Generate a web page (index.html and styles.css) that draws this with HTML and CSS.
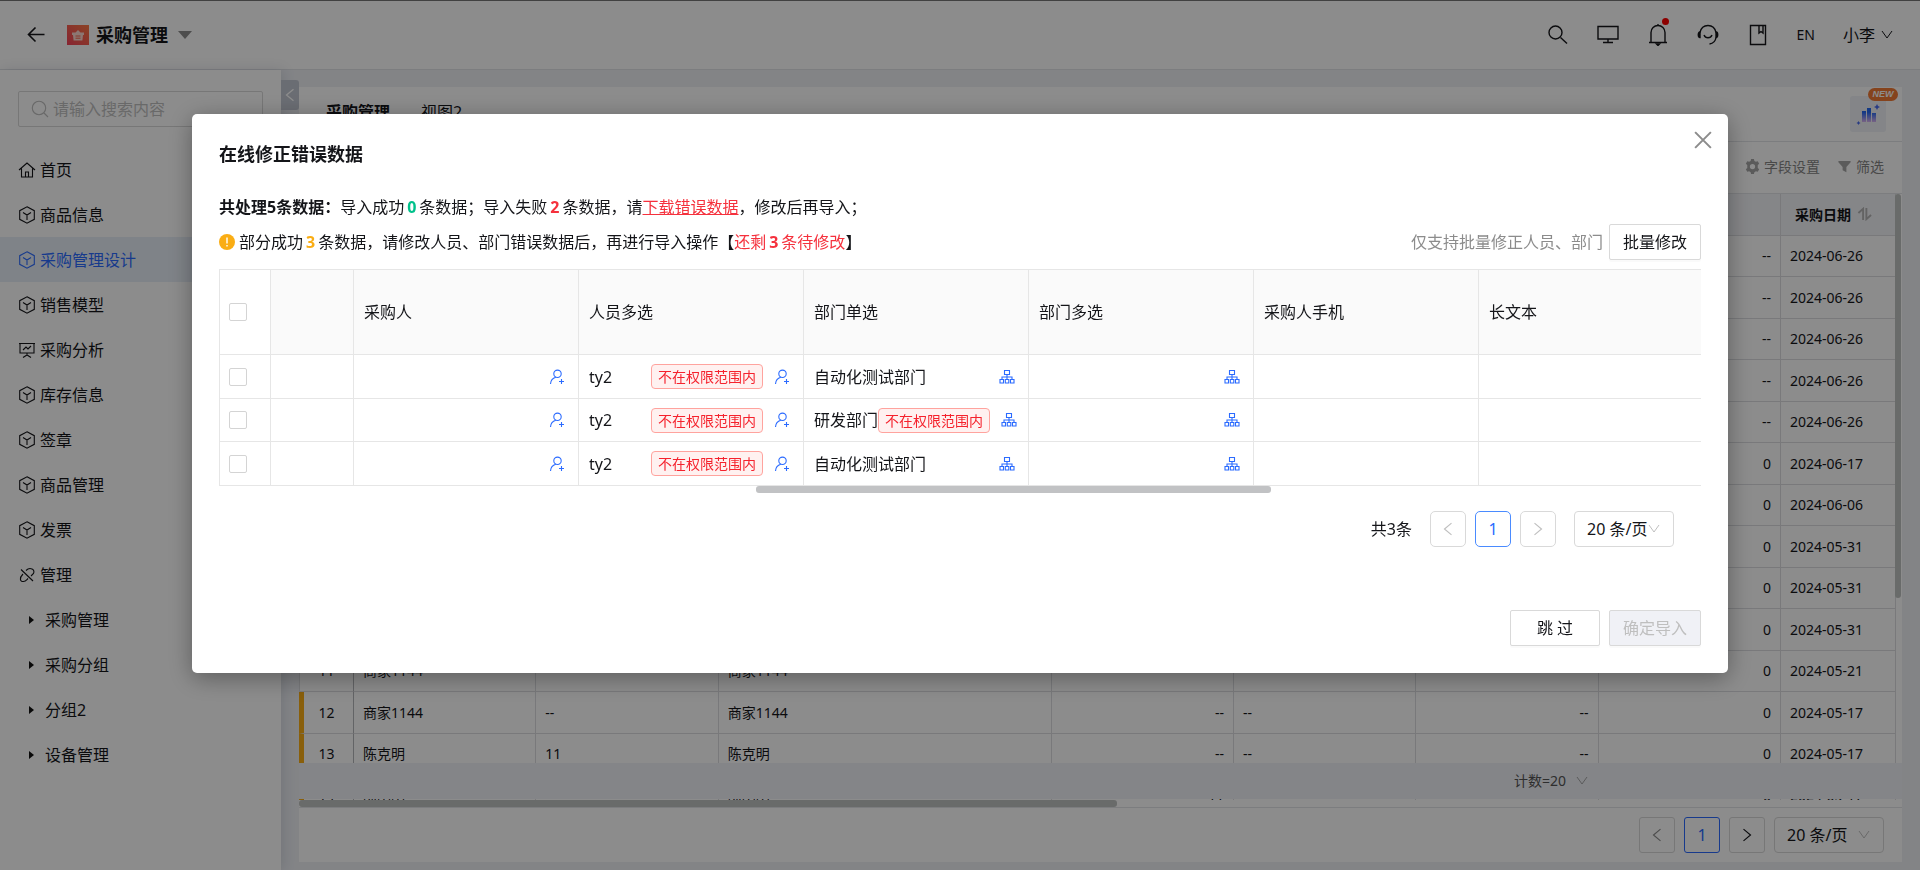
FILE: index.html
```html
<!DOCTYPE html>
<html lang="zh-CN">
<head>
<meta charset="utf-8">
<title>采购管理</title>
<link rel="stylesheet" href="styles.css">
</head>
<body>
<svg class="defs" width="0" height="0" aria-hidden="true">
  <symbol id="cube" viewBox="0 0 18 18"><path d="M9 .8 16.300 4.700V13.300L9 17.200 1.700 13.300V4.700ZM5 6.500 9 9l4-2.500M9 9v5"/></symbol>
  <symbol id="user" viewBox="0 0 16 16"><circle cx="8.500" cy="4.800" r="3.700"/><path d="M1.500 15c.2-3.600 2.200-5.800 5.300-6.700M12.500 10v5M10 12.500h5"/></symbol>
  <symbol id="org" viewBox="0 0 16 16"><path d="M5.500 1.500h5v4h-5ZM8 5.500v5M3 10.500V8h10v2.500M1 10.500h3.500V14H1ZM6.300 10.500h3.500V14H6.300ZM11.500 10.500H15V14h-3.500Z"/></symbol>
  <symbol id="down" viewBox="0 0 12 12"><path d="m1 2 5 7 5-7"/></symbol>
  <symbol id="left" viewBox="0 0 12 12"><path d="M9 1 3 6l6 5"/></symbol>
  <symbol id="right" viewBox="0 0 12 12"><path d="m3 1 6 5-6 5"/></symbol>
</svg>
<div class="app">
  <header class="top">
    <button class="plain" aria-label="返回"><svg class="ic back" viewBox="0 0 18 18"><path d="M17.500 8.500H1.500M8.500 1.500l-7 7 7 7"/></svg></button>
    <svg class="logo" viewBox="0 0 22 20"><defs><linearGradient id="lg" x1="1" y1="0" x2="0" y2="1"><stop offset="0" stop-color="#ff7a45"/><stop offset="1" stop-color="#f5435c"/></linearGradient></defs><path fill="url(#lg)" d="M0 0h22v20H0z"/><path fill="#ffd9cf" d="M5 7.500h3.500L11 5l2.500 2.500H17v2.500h-1l-.6 5.500H6.600L6 10H5z"/><path stroke="#f5654c" d="M8.500 11h5M8.500 13.200h5"/></svg>
    <h1>采购管理</h1><span class="caret"></span>
    <nav class="tools">
      <button class="plain" aria-label="搜索"><svg class="ic t22" viewBox="0 0 22 22"><circle cx="8.500" cy="8.500" r="6.500"/><path d="m13.500 13.500 6.500 6"/></svg></button>
      <button class="plain" aria-label="桌面"><svg class="ic t22" viewBox="0 0 22 22"><path d="M1 2.500h20v12.500H1ZM11 15v3.500M6 18.500h10"/></svg></button>
      <button class="plain bell" aria-label="通知"><svg class="ic t22" viewBox="0 0 22 22"><path d="M4 18.500V8.500a7 7 0 0 1 14 0V18.500M2 18.500h18M11 0v2"/><path class="fill" d="M9.500 20h3l-1.500 1.500Z"/></svg><i class="dot"></i></button>
      <button class="plain" aria-label="客服"><svg class="ic t22" viewBox="0 0 22 22"><path d="M3 8.500C4 3.800 7 1.500 11 1.500s7 2.300 8 7M7 11c1.500 3.700 6.500 3.700 8 0M19 13.500c-.5 3.500-2.500 6-6.500 6.500"/><path class="fill" d="M3 8C.7 8 .7 13.500 3 13.500ZM19 8c2.300 0 2.300 5.500 0 5.500Z"/></svg></button>
      <button class="plain" aria-label="手册"><svg class="ic t22" viewBox="0 0 22 22"><path d="M3.500 1.500h15v19h-15ZM12 1.500V9l2-1.500L16 9V1.500"/></svg></button>
      <button class="plain en">EN</button>
      <button class="plain me">小李 <svg class="ic s12"><use href="#down"/></svg></button>
    </nav>
  </header>
  <div class="body">
    <aside class="side">
      <label class="search"><svg class="ic" viewBox="0 0 18 18"><circle cx="8" cy="8" r="6.700"/><path d="m13 13 4 4"/></svg><input type="text" placeholder="请输入搜索内容" aria-label="搜索"></label>
      <nav class="menu">
        <a href="#"><svg class="ic" viewBox="0 0 18 18"><path d="M1 9 9 2l8 7M3.500 7.500V16h11V7.500M7.500 16v-5h3v5"/></svg>首页</a>
        <a href="#"><svg class="ic"><use href="#cube"/></svg>商品信息</a>
        <a href="#" class="on"><svg class="ic"><use href="#cube"/></svg>采购管理设计</a>
        <a href="#"><svg class="ic"><use href="#cube"/></svg>销售模型</a>
        <a href="#"><svg class="ic" viewBox="0 0 18 18"><path d="M1 2.500h16M2 2.500v9.500h14V2.500M5 9l3-3 2 2 3-3M9 12v2M5 16.500l4-2.500 4 2.500"/></svg>采购分析</a>
        <a href="#"><svg class="ic"><use href="#cube"/></svg>库存信息</a>
        <a href="#"><svg class="ic"><use href="#cube"/></svg>签章</a>
        <a href="#"><svg class="ic"><use href="#cube"/></svg>商品管理</a>
        <a href="#"><svg class="ic"><use href="#cube"/></svg>发票</a>
        <a href="#"><svg class="ic" viewBox="0 0 18 18"><path d="M3 3.500 15 15M8 4.500c4-4 9.500-1 7.500 3L13 10M5 8c-4 4-3 8 .5 7.500 2 0 3-1.500 4.500-3"/></svg>管理</a>
        <a href="#" class="sub">采购管理</a>
        <a href="#" class="sub">采购分组</a>
        <a href="#" class="sub">分组2</a>
        <a href="#" class="sub">设备管理</a>
      </nav>
    </aside>
    <main class="main">
      <button class="fold" aria-label="收起"><svg class="ic s14"><use href="#left"/></svg></button>
      <section class="card">
        <div class="tabs"><a href="#" class="cur">采购管理</a><a href="#">视图2</a>
          <button class="ai" aria-label="智能分析"><svg viewBox="0 0 24 24"><defs><linearGradient id="bg" x1="0" y1="0" x2="0" y2="1"><stop offset=".3" stop-color="#2468f2"/><stop offset="1" stop-color="#d9b3f0"/></linearGradient></defs><path fill="url(#bg)" d="M6 8h4v11H6zM11 5h4v14h-4zM16 10h4v9h-4z"/><path fill="#4a6cf0" d="m21 1 1 2 2 1-2 1-1 2-1-2-2-1 2-1zM2.500 18l.7 1.300 1.300.7-1.300.7-.7 1.300-.7-1.300L.5 20l1.300-.7z"/></svg><span class="new">NEW</span></button>
        </div>
        <div class="bar">
          <button class="plain"><svg class="gear" viewBox="0 0 16 16"><path fill-rule="evenodd" d="M6.500 0h3l.5 2 1.600.9 2-.6L15.100 5l-1.500 1.400v3.200l1.500 1.400-1.500 2.700-2-.6-1.600.9-.5 2h-3L6 14l-1.600-.9-2 .6L.9 11l1.500-1.400V6.400L.9 5l1.500-2.700 2 .6L6 2zM8 5.200a2.800 2.800 0 1 0 0 5.600 2.800 2.800 0 0 0 0-5.600z"/></svg>字段设置</button>
          <button class="plain"><svg class="gear" viewBox="0 0 16 16"><path d="M1.500 2h13v1.500L10 8.500V14l-4-2V8.500L1.500 3.500z"/></svg>筛选</button>
        </div>
        <div class="grid">
          <table class="list">
            <colgroup><col class="c0"><col><col><col class="wide"><col><col><col><col><col class="date"></colgroup>
            <thead><tr><th></th><th></th><th></th><th></th><th></th><th></th><th></th><th></th><th>采购日期<svg class="sort" viewBox="0 0 16 14"><path d="M6.500 13.500V1.500L1.500 6M10 .5v12L15 8"/></svg></th></tr></thead>
            <tbody>
              <tr><td>1</td><td>商家1144</td><td>--</td><td>商家1144</td><td>--</td><td>--</td><td>--</td><td>--</td><td>2024-06-26</td></tr>
              <tr><td>2</td><td>商家1144</td><td>--</td><td>商家1144</td><td>--</td><td>--</td><td>--</td><td>--</td><td>2024-06-26</td></tr>
              <tr><td>3</td><td>商家1144</td><td>--</td><td>商家1144</td><td>--</td><td>--</td><td>--</td><td>--</td><td>2024-06-26</td></tr>
              <tr><td>4</td><td>商家1144</td><td>--</td><td>商家1144</td><td>--</td><td>--</td><td>--</td><td>--</td><td>2024-06-26</td></tr>
              <tr><td>5</td><td>商家1144</td><td>--</td><td>商家1144</td><td>--</td><td>--</td><td>--</td><td>--</td><td>2024-06-26</td></tr>
              <tr><td>6</td><td>商家1144</td><td>--</td><td>商家1144</td><td>--</td><td>--</td><td>--</td><td>0</td><td>2024-06-17</td></tr>
              <tr><td>7</td><td>商家1144</td><td>--</td><td>商家1144</td><td>--</td><td>--</td><td>--</td><td>0</td><td>2024-06-06</td></tr>
              <tr><td>8</td><td>商家1144</td><td>--</td><td>商家1144</td><td>--</td><td>--</td><td>--</td><td>0</td><td>2024-05-31</td></tr>
              <tr><td>9</td><td>商家1144</td><td>--</td><td>商家1144</td><td>--</td><td>--</td><td>--</td><td>0</td><td>2024-05-31</td></tr>
              <tr><td>10</td><td>商家1144</td><td>--</td><td>商家1144</td><td>--</td><td>--</td><td>--</td><td>0</td><td>2024-05-31</td></tr>
              <tr><td>11</td><td>商家1144</td><td>--</td><td>商家1144</td><td>--</td><td>--</td><td>--</td><td>0</td><td>2024-05-21</td></tr>
              <tr class="mark"><td>12</td><td>商家1144</td><td>--</td><td>商家1144</td><td>--</td><td>--</td><td>--</td><td>0</td><td>2024-05-17</td></tr>
              <tr class="mark"><td>13</td><td>陈克明</td><td>11</td><td>陈克明</td><td>--</td><td>--</td><td>--</td><td>0</td><td>2024-05-17</td></tr>
              <tr class="mark"><td>14</td><td>陈明明</td><td>--</td><td>陈明明</td><td>11</td><td>--</td><td>--</td><td>0</td><td>2024-05-17</td></tr>
            </tbody>
          </table>
          <div class="sum"><span>计数=20</span><svg class="ic s12"><use href="#down"/></svg></div>
          <div class="vbar"></div><div class="hbar"><i></i></div>
        </div>
        <div class="pager outer">
          <button class="pg" disabled aria-label="上一页"><svg class="ic s14"><use href="#left"/></svg></button>
          <button class="pg cur">1</button>
          <button class="pg" aria-label="下一页"><svg class="ic s14"><use href="#right"/></svg></button>
          <span class="sel"><select aria-label="每页条数"><option>20 条/页</option></select><svg class="ic s12"><use href="#down"/></svg></span>
        </div>
      </section>
    </main>
  </div>
</div>
<div class="mask">
  <div class="modal" role="dialog" aria-modal="true" aria-labelledby="mt">
    <button class="plain close" aria-label="关闭"><svg class="ic" viewBox="0 0 16 16"><path d="m1 1 14 14M15 1 1 15"/></svg></button>
    <h2 id="mt">在线修正错误数据</h2>
    <p class="line"><b>共处理5条数据：</b>导入成功<b class="n ok">0</b>条数据；导入失败<b class="n bad">2</b>条数据，请<a href="#">下载错误数据</a>，修改后再导入；</p>
    <div class="row2">
      <p class="line"><svg class="warn" viewBox="0 0 16 16"><circle cx="8" cy="8" r="8" fill="#faad14"/><path fill="#fff" d="M7.300 3.500h1.400v6H7.300zM7.300 11h1.400v1.500H7.300z"/></svg>部分成功<b class="n warm">3</b>条数据，请修改人员、部门错误数据后，再进行导入操作【<span class="bad">还剩<b class="n">3</b>条待修改</span>】</p>
      <span class="tip">仅支持批量修正人员、部门</span><button class="btn">批量修改</button>
    </div>
    <div class="scroll">
      <table class="fix">
        <colgroup><col class="k0"><col class="k1"><col><col><col><col><col><col></colgroup>
        <thead><tr><th><input type="checkbox" aria-label="全选"></th><th></th><th>采购人</th><th>人员多选</th><th>部门单选</th><th>部门多选</th><th>采购人手机</th><th>长文本</th></tr></thead>
        <tbody>
          <tr><td><input type="checkbox" aria-label="第1行"></td><td></td><td><div class="cell"><svg class="ic"><use href="#user"/></svg></div></td><td><div class="cell"><span class="nm">ty2</span><span class="tag">不在权限范围内</span><svg class="ic"><use href="#user"/></svg></div></td><td><div class="cell">自动化测试部门<svg class="ic"><use href="#org"/></svg></div></td><td><div class="cell"><svg class="ic"><use href="#org"/></svg></div></td><td></td><td></td></tr>
          <tr><td><input type="checkbox" aria-label="第2行"></td><td></td><td><div class="cell"><svg class="ic"><use href="#user"/></svg></div></td><td><div class="cell"><span class="nm">ty2</span><span class="tag">不在权限范围内</span><svg class="ic"><use href="#user"/></svg></div></td><td><div class="cell"><span class="nm">研发部门</span><span class="tag">不在权限范围内</span><svg class="ic"><use href="#org"/></svg></div></td><td><div class="cell"><svg class="ic"><use href="#org"/></svg></div></td><td></td><td></td></tr>
          <tr><td><input type="checkbox" aria-label="第3行"></td><td></td><td><div class="cell"><svg class="ic"><use href="#user"/></svg></div></td><td><div class="cell"><span class="nm">ty2</span><span class="tag">不在权限范围内</span><svg class="ic"><use href="#user"/></svg></div></td><td><div class="cell">自动化测试部门<svg class="ic"><use href="#org"/></svg></div></td><td><div class="cell"><svg class="ic"><use href="#org"/></svg></div></td><td></td><td></td></tr>
        </tbody>
      </table>
    </div>
    <div class="track"><i></i></div>
    <div class="pager inner">
      <span class="total">共3条</span>
      <button class="pg" disabled aria-label="上一页"><svg class="ic s14"><use href="#left"/></svg></button>
      <button class="pg cur">1</button>
      <button class="pg" disabled aria-label="下一页"><svg class="ic s14"><use href="#right"/></svg></button>
      <span class="sel"><select aria-label="每页条数"><option>20 条/页</option></select><svg class="ic s12"><use href="#down"/></svg></span>
    </div>
    <div class="foot"><button class="btn skip">跳 过</button><button class="btn" disabled>确定导入</button></div>
  </div>
</div>
</body>
</html>
```
FILE: styles.css
```css
* { box-sizing: border-box; }
body, h1, h2, p { margin: 0; }
body { height: 100vh; overflow: hidden; background: #eef0f5; color: #141519; font: 400 16px/24px "Noto Sans", "Noto Sans CJK SC", sans-serif; }
button, input, select { font: inherit; color: inherit; }
a { color: inherit; text-decoration: none; }
.defs { position: absolute; }
.plain { padding: 0; border: 0; background: none; display: flex; align-items: center; }
.ic { flex: none; width: 18px; height: 18px; fill: none; stroke: currentColor; stroke-width: 1.100; }
.ic .fill { fill: currentColor; }
.s12 { width: 12px; height: 12px; stroke-width: 1; }
.s14 { width: 14px; height: 14px; }

.app { height: 100vh; display: flex; flex-direction: column; }
.top { height: 70px; flex: none; display: flex; align-items: center; padding: 0 27px; background: #fff; border-top: 1px solid #777; border-bottom: 1px solid #e2e4e8; }
.back { stroke-width: 1.600; }
.logo { width: 22px; height: 20px; margin: 0 7px 0 22px; }
.top h1 { font-size: 18px; font-weight: 700; }
.caret { margin-left: 10px; border: 7px solid transparent; border-top: 8px solid #8c8c8c; border-bottom: 0; }
.tools { margin-left: auto; display: flex; align-items: center; gap: 28px; }
.t22 { width: 22px; height: 22px; stroke-width: 1.400; }
.bell { position: relative; }
.dot { position: absolute; top: -6px; right: 0; width: 7px; height: 7px; border-radius: 50%; background: #f00; }
.en { font-size: 14px; }
.me { gap: 6px; }

.body { flex: 1; min-height: 0; display: flex; }
.side { width: 281px; flex: none; background: #fff; box-shadow: 2px 0 12px rgba(30, 40, 70, .14); }
.search { display: flex; align-items: center; gap: 4px; height: 36px; margin: 21px 18px 20px; padding: 0 12px; border: 1px solid #d9d9d9; border-radius: 2px; color: #bfbfbf; }
.search input { flex: 1; min-width: 0; border: 0; padding: 0; background: none; outline: 0; }
.search input::placeholder { color: #bfbfbf; opacity: 1; }
.menu a { display: flex; align-items: center; gap: 4px; height: 45px; padding-left: 18px; }
.menu .on { background: #e8eff8; color: #2b6bff; }
.menu .sub { padding-left: 29px; gap: 11px; }
.sub::before { content: ""; border: 4px solid transparent; border-left: 5px solid #111; border-right: 0; }

.main { flex: 1; min-width: 0; display: flex; align-items: flex-start; padding-right: 18px; }
.fold { width: 18px; height: 30px; margin-top: 10px; padding: 0; border: 0; border-radius: 0 3px 3px 0; background: #c2c7d2; color: #fff; }
.fold .ic { display: block; margin: auto; }
.card { flex: 1; min-width: 0; align-self: stretch; margin: 17px 0 8px; background: #fff; display: flex; flex-direction: column; }
.tabs { height: 55px; flex: none; display: flex; gap: 31px; padding: 13px 16px 0 27px; border-bottom: 1px solid #e2e4e8; }
.tabs .cur { font-weight: 700; }
.ai { position: relative; width: 36px; height: 36px; margin: -4px 0 0 auto; padding: 7px 6px 5px; border: 0; border-radius: 3px; background: #f0f2f8; }
.ai svg { display: block; width: 24px; height: 24px; }
.new { position: absolute; top: -8px; right: -12px; width: 30px; border-radius: 7px; background: #f27a35; color: #fff; font: italic 700 9px/13px "Liberation Sans", sans-serif; text-align: center; }
.bar { height: 51px; flex: none; display: flex; justify-content: flex-end; gap: 17px; padding: 0 18px 2px 0; color: #858585; font-size: 14px; }
.bar .plain { gap: 4px; }
.gear { width: 15px; height: 15px; fill: #a6a6a6; }

.grid { flex: 1; min-height: 0; position: relative; overflow: hidden; border-top: 1px solid #e2e4e8; border-bottom: 1px solid #e2e4e8; }
.list { width: 100%; table-layout: fixed; border-collapse: separate; border-spacing: 0; font-size: 14px; padding-right: 6px; }
.list .c0 { width: 55px; }
.list .wide { width: 333px; }
.list .date { width: 115px; }
.list th, .list td { height: 41px; padding: 0 9px; border-right: 1px solid #dcdde1; border-bottom: 1px solid #dcdde1; text-align: left; }
.list tr:nth-child(even) td { height: 42px; }
.list th { height: 42px; background: #f3f4f8; padding-left: 14px; font-weight: 700; white-space: nowrap; }
.list td:first-child { text-align: center; border-left: 1px solid #dcdde1; border-right-color: #b5b6ba; }
.list .mark td:first-child { border-left: 5px solid #faad14; padding-left: 5px; }
.list td:nth-child(5), .list td:nth-child(7), .list td:nth-child(8) { text-align: right; }
.sort { width: 15px; height: 14px; margin-left: 6px; vertical-align: -1px; fill: none; stroke: #b4b4b4; stroke-width: 2; }
.sum { position: absolute; left: 0; right: 0; bottom: 8px; height: 36px; padding-right: 314px; display: flex; align-items: center; justify-content: flex-end; gap: 10px; background: #f0f2f8; color: #555; font-size: 14px; }
.sum .ic { color: #a6a6a6; }
.vbar { position: absolute; top: 0; right: 1px; width: 6px; height: 404px; border-radius: 3px; background: #c0c4c2; }
.hbar { position: absolute; left: 0; right: 0; bottom: 0; height: 7px; background: #fff; }
.hbar i { display: block; width: 51%; height: 7px; border-radius: 3px; background: #c0c4c2; }

.pager { display: flex; align-items: center; justify-content: flex-end; gap: 9px; }
.outer { padding: 9px 18px; }
.pg { width: 36px; height: 36px; padding: 0; border: 1px solid #d9d9d9; border-radius: 3px; background: #fff; }
.pg .ic { display: block; margin: auto; stroke-width: 1; }
.pg:disabled { color: #bfbfbf; }
.outer .pg:disabled { color: #8c8c8c; }
.pg.cur { border-color: #2b6bff; color: #2b6bff; }
.sel { position: relative; display: flex; align-items: center; }
.sel select { appearance: none; width: 110px; height: 36px; padding: 0 12px; border: 1px solid #d9d9d9; border-radius: 4px; background: #fff; }
.sel .ic { position: absolute; right: 14px; color: #bfbfbf; pointer-events: none; }

.mask { position: fixed; inset: 0; z-index: 10; background: rgba(0, 0, 0, .45); padding-top: 114px; }
.modal { position: relative; width: 80%; margin: 0 auto; padding: 27px; border-radius: 5px; background: #fff; box-shadow: 0 5px 24px rgba(0, 0, 0, .35); }
.close { position: absolute; top: 17px; right: 16px; color: #8c8c8c; }
.close .ic { stroke-width: 1.800; }
.modal h2 { padding: 0 0 28px; font-size: 18px; line-height: 26px; font-weight: 700; }
.line { line-height: 24px; white-space: nowrap; }
.line b { font-weight: 700; }
.line .n { margin: 0 3px; }
.ok { color: #00c18b; }
.bad { color: #f5313d; }
.warm { color: #faad14; }
.line a { color: #f5313d; text-decoration: underline; }
.row2 { display: flex; align-items: center; margin: 5px 0 9px; }
.row2 .line { flex: 1; }
.warn { width: 16px; height: 16px; margin-right: 4px; vertical-align: -2px; }
.tip { color: #8c8c8c; margin-right: 6px; }
.btn { height: 36px; padding: 0 13px; border: 1px solid #d9d9d9; border-radius: 2px; background: #fff; box-shadow: 0 2px 0 rgba(0, 0, 0, .02); }
.btn:disabled { background: #f0f1f6; color: #bfbfbf; }
.scroll { overflow: hidden; }
.fix { width: 1485px; table-layout: fixed; border-collapse: separate; border-spacing: 0; border-left: 1px solid #e6e6e6; border-top: 1px solid #e6e6e6; }
.fix .k0 { width: 51px; }
.fix .k1 { width: 83px; }
.fix th, .fix td { height: 44px; padding: 0 10px; border-right: 1px solid #e6e6e6; border-bottom: 1px solid #e6e6e6; text-align: left; }
.fix tbody tr:nth-child(2) td { height: 43px; }
.fix th { height: 85px; background: #fafafa; font-weight: 400; }
.fix th:first-child { background: #fff; }
.fix th:first-child, .fix td:first-child { padding: 0 9px; }
.fix input { appearance: none; display: block; width: 18px; height: 18px; margin: 0; border: 1px solid #d4d4d4; border-radius: 2px; background: #fff; }
.cell { display: flex; align-items: center; padding-right: 3px; }
.cell .ic { width: 16px; height: 16px; margin-left: auto; color: #2b6bff; }
.nm { flex: 1; white-space: nowrap; }
.tag { height: 25px; margin-right: 11px; padding: 0 6px; border: 1px solid #ffa39e; border-radius: 4px; background: #fff1f0; color: #f5222d; font-size: 14px; line-height: 23px; white-space: nowrap; }
.track i { display: block; width: 515px; height: 7px; margin-left: 537px; border-radius: 3px; background: #c1c2c4; }
.inner { padding: 18px 27px 0 0; }
.inner .pg { border-radius: 5px; }
.inner .pg.cur { border-color: #4a8bff; }
.inner .sel { margin-left: 9px; }
.inner select { width: 100px; }
.total { margin-right: 9px; }
.foot { display: flex; justify-content: flex-end; gap: 9px; padding-top: 63px; }
.skip { width: 90px; }
```
